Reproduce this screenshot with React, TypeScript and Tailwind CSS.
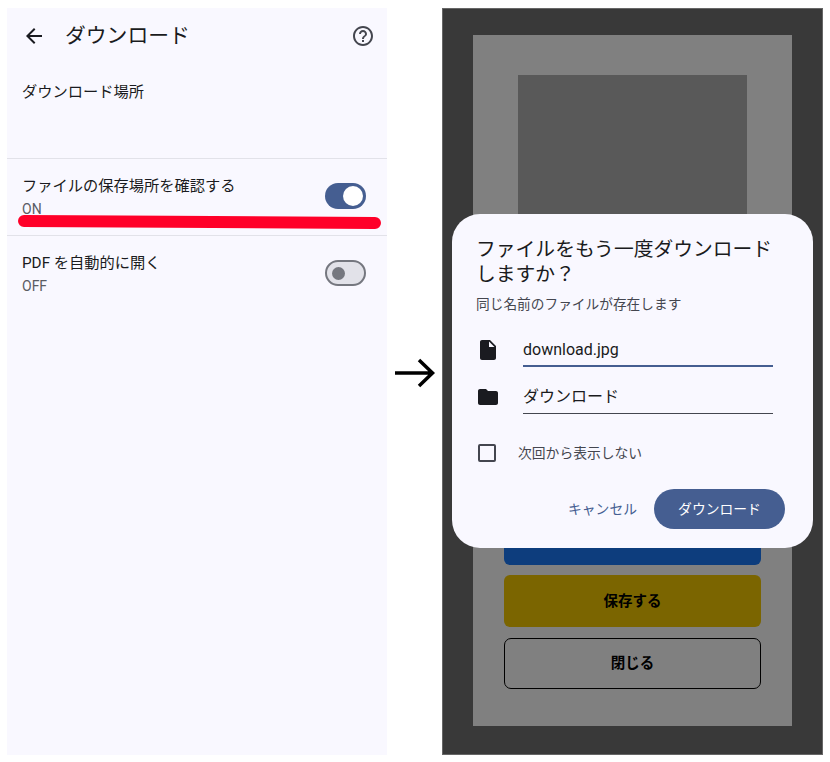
const font = { fontFamily: '"Roboto", "Noto Sans CJK JP", sans-serif' };

function Toggle({ on }: { on: boolean }) {
  return on ? (
    <div className="flex h-[26px] w-[41px] items-center justify-end rounded-full bg-[#455e91] pr-[3px]">
      <div className="h-[20px] w-[20px] rounded-full bg-white" />
    </div>
  ) : (
    <div className="flex h-[26px] w-[41px] items-center rounded-full border-2 border-[#75777f] bg-[#e2e2e9] pl-[5px]">
      <div className="h-[13px] w-[13px] rounded-full bg-[#75777f]" />
    </div>
  );
}

function Row({ title, sub, on }: { title: string; sub: string; on: boolean }) {
  return (
    <div className="flex h-[77px] items-center justify-between border-t border-[#e2e2e9] pl-[15px] pr-[21px]">
      <div className="flex flex-col">
        <div className="text-[15.25px] leading-[22px] text-[#1a1b20]">{title}</div>
        <div className="pt-[1px] text-[14px] leading-[22px] text-[#5a5c64]">{sub}</div>
      </div>
      <div className="mb-[2px]">
        <Toggle on={on} />
      </div>
    </div>
  );
}

export default function App() {
  return (
    <div className="flex h-[762px] w-[830px] items-start bg-white pl-[7px] pt-[8px]" style={font}>
      {/* Left settings screen */}
      <div className="relative flex h-[747px] w-[380px] shrink-0 flex-col bg-[#f9f8ff]">
        <div className="flex h-[56px] items-center pl-[15px] pr-[12px]">
          <svg width="24" height="24" viewBox="0 0 24 24" fill="#1a1b20" className="shrink-0">
            <path d="M20 11H7.83l5.59-5.59L12 4l-8 8 8 8 1.41-1.41L7.83 13H20v-2z" />
          </svg>
          <div className="ml-[19px] flex-1 pt-[2px] text-[20.8px] text-[#1a1b20]">ダウンロード</div>
          <svg width="24" height="24" viewBox="0 0 24 24" fill="#44464f" className="shrink-0">
            <path d="M11 18h2v-2h-2v2zm1-16C6.48 2 2 6.48 2 12s4.48 10 10 10 10-4.48 10-10S17.52 2 12 2zm0 18c-4.41 0-8-3.59-8-8s3.59-8 8-8 8 3.59 8 8-3.59 8-8 8zm0-14c-2.21 0-4 1.79-4 4h2c0-1.1.9-2 2-2s2 .9 2 2c0 2-3 1.75-3 5h2c0-2.25 3-2.5 3-5 0-2.21-1.79-4-4-4z" />
          </svg>
        </div>
        <div className="h-[94px] pl-[15px] pt-[17px] text-[15.25px] leading-[22px] text-[#1a1b20]">ダウンロード場所</div>
        <Row title="ファイルの保存場所を確認する" sub="ON" on />
        <Row title="PDF を自動的に開く" sub="OFF" on={false} />
        <svg className="absolute left-[11px] top-[206px]" width="364" height="16" viewBox="0 0 364 16" fill="none">
          <path d="M6 7 C120 8 250 8 357 9" stroke="#ff0029" strokeWidth="12" strokeLinecap="round" />
        </svg>
      </div>

      {/* Arrow */}
      <div className="flex h-[730px] w-[55px] shrink-0 items-center justify-center">
        <svg width="42" height="32" viewBox="0 0 42 32" fill="none" stroke="#000" strokeWidth="3.5" className="ml-[1px]">
          <path d="M1 16 H38 M25 3 L38.5 16 L25 29" />
        </svg>
      </div>

      {/* Right dimmed screen */}
      <div className="relative flex h-[747px] w-[381px] shrink-0 justify-center border border-[#666666] bg-[#393939] pt-[26px]">
        <div className="flex h-[691px] w-[319px] flex-col items-center bg-[#808080] pt-[40px]">
          <div className="h-[438px] w-[229px] bg-[#595959]" />
          <div className="flex w-[257px] flex-col">
            <div className="h-[52px] rounded-[6px] bg-[#0d3d7d]" />
            <div className="mt-[10px] flex h-[52px] items-center justify-center rounded-[6px] bg-[#7b6500] pt-[1px] text-[14.5px] font-bold text-black">保存する</div>
            <div className="mt-[11px] flex h-[51px] items-center justify-center rounded-[7px] border-[1.5px] border-black text-[14.5px] font-bold text-black">閉じる</div>
          </div>
        </div>

        {/* Dialog */}
        <div className="absolute left-[9px] top-[205px] flex h-[334px] w-[361px] flex-col rounded-[28px] bg-[#f9f8ff] pl-[24px] pr-[28px] pt-[23px]">
          <div className="text-[19.8px] leading-[25px] text-[#1a1b20]">ファイルをもう一度ダウンロードしますか？</div>
          <div className="mt-[7px] text-[13.7px] leading-[20px] text-[#44464f]">同じ名前のファイルが存在します</div>
          <div className="mt-[6px] flex h-[47px] items-start">
            <svg width="24" height="24" viewBox="0 0 24 24" fill="#1a1b20" className="mt-[18px] shrink-0">
              <path d="M14 2H6c-1.1 0-2 .9-2 2v16c0 1.1.9 2 2 2h12c1.1 0 2-.9 2-2V8l-6-6zm-1 7V3.5L18.5 9H13z" />
            </svg>
            <div className="ml-[23px] flex h-full w-[250px] items-center border-b-2 border-[#455e91] pt-[14px] text-[16px] text-[#1a1b20]">download.jpg</div>
          </div>
          <div className="flex h-[47px] items-start">
            <svg width="24" height="24" viewBox="0 0 24 24" fill="#1a1b20" className="mt-[18px] shrink-0">
              <path d="M10 4H4c-1.1 0-1.99.9-1.99 2L2 18c0 1.1.9 2 2 2h16c1.1 0 2-.9 2-2V8c0-1.1-.9-2-2-2h-8l-2-2z" />
            </svg>
            <div className="ml-[23px] flex h-full w-[250px] items-center border-b border-[#44464f] pt-[14px] text-[16px] text-[#1a1b20]">ダウンロード</div>
          </div>
          <div className="mt-[15px] flex h-[48px] items-center">
            <div className="ml-[2px] h-[18px] w-[18px] shrink-0 rounded-[2px] border-2 border-[#44464f]" />
            <div className="ml-[22px] text-[13.8px] text-[#44464f]">次回から表示しない</div>
          </div>
          <div className="mt-[12px] flex items-center justify-end">
            <div className="text-[13.8px] text-[#455e91]">キャンセル</div>
            <div className="ml-[17px] flex h-[40px] w-[131px] items-center justify-center rounded-full bg-[#455e91] text-[13.8px] text-white">ダウンロード</div>
          </div>
        </div>
      </div>
    </div>
  );
}
